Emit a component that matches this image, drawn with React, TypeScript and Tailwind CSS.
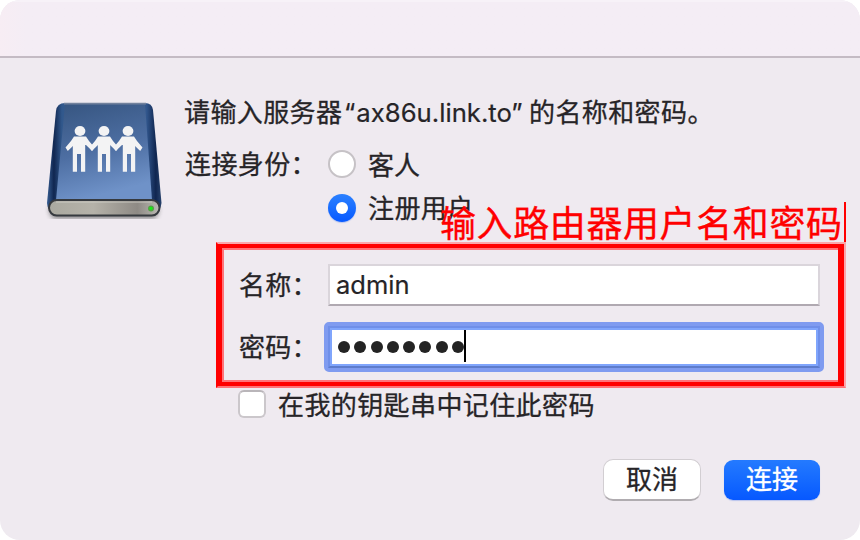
import React from "react";

const inter = "font-['Inter','Noto_Sans_CJK_SC',sans-serif]";
const cjk = "font-['Noto_Sans_CJK_SC',sans-serif]";

function Person({ x, lean = 0 }: { x: number; lean?: number }) {
  return (
    <g transform={`translate(${x} 0)`} fill="#f3f3f4">
      <ellipse cx="0" cy="46" rx="5.4" ry="5.1" />
      <path d="M-6 51.5 H6 L9 56 L14.5 62.5 L12.2 66 L6 60 H-6 L-12.2 66 L-14.5 62.5 L-9 56 Z" />
      <path transform={`translate(${lean} 0)`} d="M-6.2 55 H6.2 V86.8 H2 V69 H-2 V86.8 H-6.2 Z" />
    </g>
  );
}

function ServerDriveIcon() {
  return (
    <svg width="126" height="134" viewBox="0 0 126 134" className="block">
      <defs>
        <linearGradient id="face" x1="0" y1="0" x2="0.25" y2="1">
          <stop offset="0" stopColor="#365580" />
          <stop offset="0.55" stopColor="#4d6ea2" />
          <stop offset="1" stopColor="#6f92c8" />
        </linearGradient>
        <linearGradient id="edge" x1="0" y1="0" x2="1" y2="0">
          <stop offset="0" stopColor="#365d91" />
          <stop offset="0.06" stopColor="#102650" />
          <stop offset="0.13" stopColor="#31588c" />
          <stop offset="0.5" stopColor="#446898" />
          <stop offset="0.87" stopColor="#31568c" />
          <stop offset="0.95" stopColor="#102650" />
          <stop offset="1" stopColor="#29446d" />
        </linearGradient>
        <linearGradient id="base" x1="0" y1="0" x2="1" y2="0">
          <stop offset="0" stopColor="#aaa9a0" />
          <stop offset="0.4" stopColor="#b5b2a9" />
          <stop offset="0.8" stopColor="#8e8a85" />
          <stop offset="1" stopColor="#bbb9b3" />
        </linearGradient>
        <filter id="shade" x="-20%" y="-100%" width="140%" height="300%">
          <feGaussianBlur stdDeviation="2" />
        </filter>
      </defs>
      <rect x="9" y="117" width="110" height="17" rx="8" fill="#555" opacity=".6" filter="url(#shade)" />
      <path d="M25 18 H105 Q112 18 113 25 L121.5 118 Q121 127 111 130 H18 Q7 127 7 118 L16 26 Q17 18 25 18Z" fill="url(#edge)" />
      <path d="M25 19 H105 L112 115 H16Z" fill="url(#face)" />
      <path d="M24 18.6 H106" stroke="#72829d" strokeWidth="1.8" />
      <Person x={40} lean={-1} />
      <Person x={64} />
      <Person x={88} lean={1} />
      <rect x="9" y="115" width="110.5" height="15.5" rx="7.7" fill="url(#base)" stroke="#363a3f" strokeWidth="2" />
      <path d="M16 117.2 H112" stroke="#d1d0c9" strokeWidth="1.3" opacity=".6" />
      <circle cx="111" cy="123.5" r="3" fill="#55a046" />
      <circle cx="111" cy="123.3" r="1.6" fill="#19ec18" />
    </svg>
  );
}

function Radio({ checked = false }: { checked?: boolean }) {
  return checked ? (
    <span className="flex size-7 items-center justify-center rounded-full bg-linear-to-b from-[#2b80ff] to-[#0758ff] shadow-[0_1px_1px_#b7c5ef]">
      <span className="size-3 rounded-full bg-white" />
    </span>
  ) : (
    <span className="size-7 rounded-full border-2 border-[#c6c2c6] bg-white" />
  );
}

export default function App() {
  return (
    <main className={`relative flex h-[540px] w-[860px] flex-col overflow-hidden rounded-[20px] bg-[#efeaf0] text-[26px] leading-[36px] text-[#262427] [-webkit-text-stroke:0.3px] ${inter}`}>
      <header className="h-[58px] shrink-0 border-t-2 border-b-2 border-t-[#f7f2f8] border-b-[#c4bbc4] bg-linear-to-r from-[#f7edf4] from-0% to-[#f4edf5] to-[3%]" />
      <div className="flex flex-1">
        <aside className="w-[184px] shrink-0 pt-[27px] pl-10">
          <ServerDriveIcon />
        </aside>
        <section className="flex flex-1 flex-col">
          <h1 className="mt-[35px] flex h-[37px] whitespace-nowrap font-normal">
            <span className={`tracking-[0.4px] w-[160px] ${cjk}`}>请输入服务器</span>
            <span className="w-[185px] pt-[2px] text-[25.7px] [-webkit-text-stroke:0.2px]"><span className="mr-px">“</span>ax86u.link.to<span>”</span></span>
            <span className={`tracking-[0.4px] ${cjk}`}>的名称和密码。</span>
          </h1>
          <div className="mt-3 flex h-11 items-center">
            <span className={`w-[144px] pb-0.5 pl-px tracking-[0.4px] ${cjk}`}>连接身份：</span>
            <label className={`flex items-center gap-3 ${cjk}`}>
              <Radio />
              <span className="pb-px">客人</span>
            </label>
          </div>
          <label className={`ml-[144px] flex h-11 items-center gap-3 tracking-[0.4px] ${cjk}`}>
            <Radio checked />
            <span className="pb-[3px]">注册用户</span>
          </label>
          <div className="mt-[34px] ml-[54px] flex h-[42px] items-center">
            <span className={`w-[90px] pb-[3px] pl-px tracking-[0.2px] ${cjk}`}>名称：</span>
            <div className="flex h-[42px] w-[492px] items-center border-2 border-[#dad5db] border-b-[#b0a9b1] bg-white pl-1.5 text-[25.5px] [-webkit-text-stroke:0.2px]">
              admin
            </div>
          </div>
          <div className="mt-4 ml-[54px] flex h-[50px] items-center">
            <span className={`w-[86px] pb-[3px] pl-px tracking-[0.2px] ${cjk}`}>密码：</span>
            <div className="h-[50px] w-[500px] rounded-[5px] border-4 border-[#7f9bf0]">
              <div className="h-full border-2 border-[#6f8fe9] border-b-[#5d7ccc]">
                <div className="flex h-full items-start border-2 border-[#80a5fc] bg-white pl-1.5">
                  <span className="flex gap-[4.25px] pt-[11px]">
                    {Array.from({ length: 8 }, (_, i) => (
                      <i key={i} className="size-3 rounded-full bg-[#232323]" />
                    ))}
                  </span>
                  <span className="h-8 w-0.5 bg-black" />
                </div>
              </div>
            </div>
          </div>
          <label className={`mt-3.5 ml-[54px] flex h-9 items-center gap-3 tracking-[0.4px] ${cjk}`}>
            <span className="size-7 rounded-[6px] border-2 border-[#cbc7cb] border-t-[#b9b5b9] bg-white" />
            <span className="pb-px">在我的钥匙串中记住此密码</span>
          </label>
          <div className={`mt-[37px] mr-10 flex justify-end gap-[23px] ${cjk}`}>
            <button className="flex h-[42px] w-[98px] items-center justify-center rounded-[10px] border border-[#d2ced2] border-b-2 border-b-[#b0acb0] bg-white pb-[4px]">取消</button>
            <button className="mt-px flex h-10 w-24 items-center justify-center rounded-[9px] bg-linear-to-b from-[#247aff] to-[#0758ff] pb-[5px] text-white shadow-[0_1px_1px_#b9c4ed]">连接</button>
          </div>
        </section>
      </div>
      <div className="absolute top-[242px] left-[216px] h-[146px] w-[630px] border-2 border-[#ff7379] border-t-[#fba6aa] border-r-[#fca6ac] border-l-[#f00]">
        <div className="h-full border-4 border-r-[6px] border-[#f00]">
          <div className="h-full border-t-2 border-b-2 border-l-2 border-[#ff7379]" />
        </div>
      </div>
      <div className={`absolute top-[202px] left-[440px] flex h-10 items-center text-[36px] leading-10 whitespace-nowrap tracking-[0.6px] text-[#f00] [-webkit-text-stroke:0.35px] ${cjk}`}>
        <span className="w-[404px] pb-[3px]">输入路由器用户名和密码</span>
        <span className="h-10 w-0.5 bg-[#f00]" />
      </div>
    </main>
  );
}
